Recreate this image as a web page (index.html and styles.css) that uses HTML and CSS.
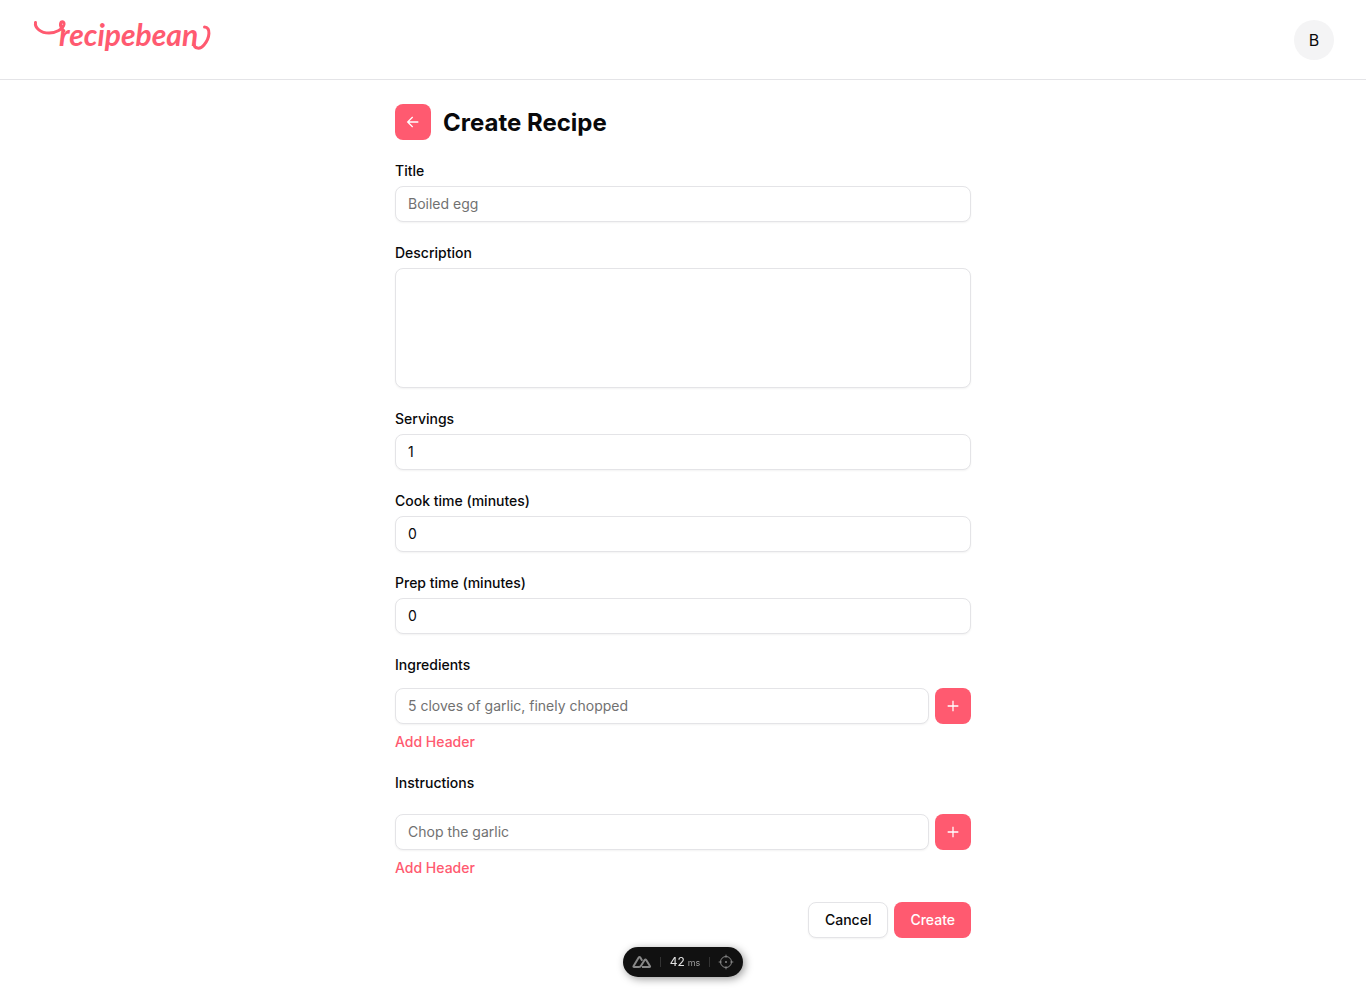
FILE: index.html
```html
<!DOCTYPE html>
<html lang="en">
<head>
<meta charset="utf-8">
<meta name="viewport" content="width=device-width, initial-scale=1">
<title>Create Recipe</title>
<link rel="stylesheet" href="styles.css">
</head>
<body>
<header class="site-header">
  <a class="logo" href="#" aria-label="recipebean">
    <svg width="184" height="52" viewBox="0 -4 184 52">
      <path class="swash" d="M3.500 4.500C2.500 10 9 15 17 15C24 15 31 11 32 6.500C32.500 3 29 3 28.500 6C28 9 30 11 32 13"/>
      <text class="wordmark" x="27" y="28">recipebean</text>
      <path class="swash" d="M162 26C162 30.500 168 32 172 27C178 20 179 9 172.500 9"/>
    </svg>
  </a>
  <button class="avatar" type="button">B</button>
</header>
<main class="page">
  <div class="heading">
    <button class="btn icon-btn" type="button" aria-label="Back">
      <svg class="icon" viewBox="0 0 15 15"><path d="M7.200 2.800 2.500 7.500l4.700 4.700M2.500 7.500H12.500"/></svg>
    </button>
    <h1>Create Recipe</h1>
  </div>
  <form class="form">
    <div class="field"><label for="title">Title</label><input class="input" id="title" type="text" placeholder="Boiled egg"></div>
    <div class="field"><label for="description">Description</label><textarea class="input area" id="description"></textarea></div>
    <div class="field"><label for="servings">Servings</label><input class="input" id="servings" type="text" inputmode="numeric" value="1"></div>
    <div class="field"><label for="cook">Cook time (minutes)</label><input class="input" id="cook" type="text" inputmode="numeric" value="0"></div>
    <div class="field"><label for="prep">Prep time (minutes)</label><input class="input" id="prep" type="text" inputmode="numeric" value="0"></div>
    <div class="field">
      <label for="ingredient">Ingredients</label>
      <div class="row ingredient-row">
        <input class="input" id="ingredient" type="text" placeholder="5 cloves of garlic, finely chopped">
        <button class="btn icon-btn" type="button" aria-label="Add ingredient"><svg class="icon" viewBox="0 0 15 15"><path d="M7.500 2.500v10M2.500 7.500h10"/></svg></button>
      </div>
      <button class="link-btn" type="button">Add Header</button>
    </div>
    <div class="field">
      <label for="instruction">Instructions</label>
      <div class="row instruction-row">
        <input class="input" id="instruction" type="text" placeholder="Chop the garlic">
        <button class="btn icon-btn" type="button" aria-label="Add instruction"><svg class="icon" viewBox="0 0 15 15"><path d="M7.500 2.500v10M2.500 7.500h10"/></svg></button>
      </div>
      <button class="link-btn" type="button">Add Header</button>
    </div>
    <div class="actions">
      <button class="btn outline" type="button">Cancel</button>
      <button class="btn" type="submit">Create</button>
    </div>
  </form>
</main>
<div class="devtools">
  <button class="tool" type="button" aria-label="Open devtools">
    <svg width="20" height="14" viewBox="0 0 20 14"><path class="peaks" d="M7 12H2.200q-1.200 0-.6-1L6.700 2.500q.8-1.200 1.600 0l1.900 3.300M7 12q1.400 0 2.200-1.400L12.600 5q.8-1.200 1.600 0l3.700 6q.6 1-.6 1H10"/></svg>
  </button>
  <span class="divider"></span>
  <span class="timing">42<small>ms</small></span>
  <span class="divider"></span>
  <button class="tool" type="button" aria-label="Inspect component">
    <svg width="16" height="16" viewBox="0 0 16 16"><circle class="target" cx="8" cy="8" r="5.500"/><path class="target" d="M8 .7v3M8 12.300v3M.7 8h3M12.300 8h3"/><circle class="dot" cx="8" cy="8" r="1"/></svg>
  </button>
</div>
</body>
</html>
```

FILE: styles.css
```css
:root {
  --primary: #ff5a70;
  --border: #e4e4e7;
  --text: #09090b;
}
* { box-sizing: border-box; }
body {
  margin: 0;
  background: #fff;
  color: var(--text);
  font: 14px/20px Inter, "Liberation Sans", sans-serif;
}
button, input, textarea { font: inherit; color: inherit; }
button { cursor: pointer; }
svg { display: block; }

.site-header {
  display: flex;
  align-items: center;
  justify-content: space-between;
  height: 80px;
  padding: 0 32px;
  border-bottom: 1px solid var(--border);
}
.logo { color: var(--primary); }
.swash {
  fill: none;
  stroke: currentColor;
  stroke-width: 3;
  stroke-linecap: round;
}
.wordmark {
  fill: currentColor;
  font: italic 700 30px Lato, sans-serif;
}
.avatar {
  width: 40px;
  height: 40px;
  padding: 0;
  border: 0;
  border-radius: 50%;
  background: #f4f4f5;
  font-size: 16px;
}

.page {
  max-width: 624px;
  margin: 0 auto;
  padding: 24px 24px 56px;
}
.heading {
  display: flex;
  align-items: center;
  gap: 12px;
  margin-bottom: 24px;
}
h1 { margin: 0; padding-top: 2px; font-size: 24px; line-height: 32px; font-weight: 700; }
.form { display: flex; flex-direction: column; gap: 24px; }
.field { display: flex; flex-direction: column; gap: 8px; }
label { font-weight: 500; line-height: 14px; }
.input {
  width: 100%;
  min-width: 0;
  height: 36px;
  padding: 4px 12px 6px;
  border: 1px solid var(--border);
  border-radius: 8px;
  background: #fff;
  box-shadow: 0 1px 2px rgba(0, 0, 0, .05);
}
.input::placeholder { color: #717171; opacity: 1; }
.area { height: 120px; padding: 8px 12px; resize: none; }
.row { display: flex; gap: 6px; }
.ingredient-row { padding-top: 8px; }
.instruction-row { padding-top: 16px; }

.btn {
  height: 36px;
  padding: 0 16px;
  border: 0;
  border-radius: 8px;
  background: var(--primary);
  color: #fff;
  font-weight: 500;
}
.icon-btn {
  display: grid;
  flex: none;
  place-items: center;
  width: 36px;
  padding: 0;
}
.icon {
  width: 16px;
  height: 16px;
  fill: none;
  stroke: currentColor;
  stroke-width: 1.2;
}
.outline {
  border: 1px solid var(--border);
  background: #fff;
  color: var(--text);
  box-shadow: 0 1px 2px rgba(0, 0, 0, .05);
}
.link-btn {
  align-self: flex-start;
  padding: 0;
  border: 0;
  background: none;
  color: var(--primary);
  font-weight: 500;
}
.actions { display: flex; justify-content: flex-end; gap: 6px; }

.devtools {
  position: fixed;
  bottom: 17px;
  left: 50%;
  display: flex;
  align-items: center;
  justify-content: space-between;
  width: 120px;
  height: 30px;
  padding: 0 9px;
  border-radius: 15px;
  background: #111;
  color: #888;
  box-shadow: 2px 2px 8px rgba(0, 0, 0, .4);
  transform: translateX(-50%);
}
.tool { padding: 0; border: 0; background: none; }
.peaks { fill: none; stroke: currentColor; stroke-width: 2; stroke-linejoin: round; }
.target { fill: none; stroke: currentColor; stroke-width: 1; }
.dot { fill: currentColor; }
.divider { width: 1px; height: 10px; background: #333; }
.timing {
  display: flex;
  align-items: baseline;
  gap: 3px;
  color: #e2e2e2;
  font: 12px/16px Inter, "Liberation Sans", sans-serif;
}
.timing small { color: #999; font-size: 9px; }
```
